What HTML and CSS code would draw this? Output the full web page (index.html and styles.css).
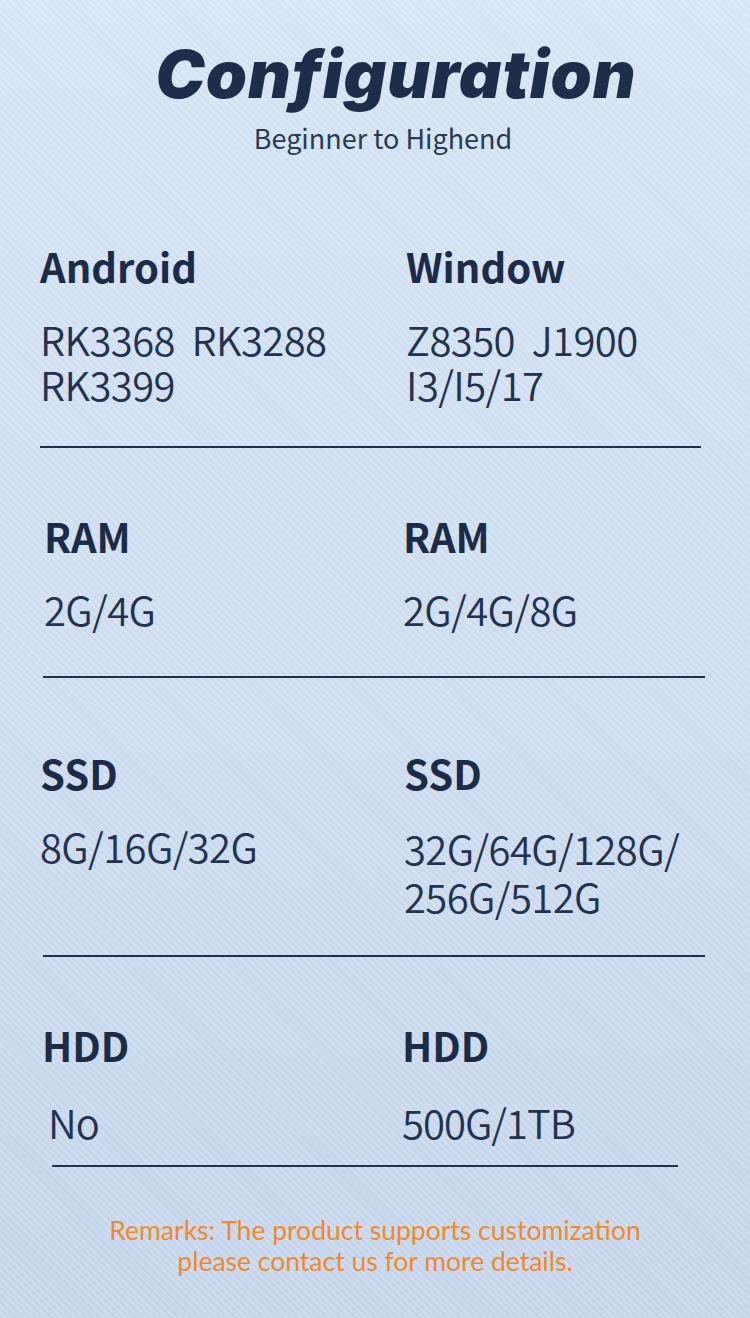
FILE: index.html
```html
<!DOCTYPE html>
<html lang="en">
<head>
<meta charset="utf-8">
<title>Configuration</title>
<link rel="stylesheet" href="styles.css">
</head>
<body>
<main class="page">
  <header class="hero">
    <h1 class="title">Configuration</h1>
    <p class="subtitle">Beginner to Highend</p>
  </header>

  <section class="spec spec--os">
    <div class="col">
      <h2 class="label">Android</h2>
      <p class="value">RK3368&nbsp;&nbsp;RK3288<br>RK3399</p>
    </div>
    <div class="col col--right">
      <h2 class="label">Window</h2>
      <p class="value">Z8350&nbsp;&nbsp;J1900<br>I3/I5/17</p>
    </div>
  </section>
  <hr class="rule rule--os">

  <section class="spec spec--ram">
    <div class="col">
      <h2 class="label">RAM</h2>
      <p class="value">2G/4G</p>
    </div>
    <div class="col col--right">
      <h2 class="label">RAM</h2>
      <p class="value">2G/4G/8G</p>
    </div>
  </section>
  <hr class="rule rule--ram">

  <section class="spec spec--ssd">
    <div class="col">
      <h2 class="label">SSD</h2>
      <p class="value">8G/16G/32G</p>
    </div>
    <div class="col col--right">
      <h2 class="label">SSD</h2>
      <p class="value value--tall">32G/64G/128G/<br>256G/512G</p>
    </div>
  </section>
  <hr class="rule rule--ssd">

  <section class="spec spec--hdd">
    <div class="col">
      <h2 class="label">HDD</h2>
      <p class="value value--narrow value--indent">No</p>
    </div>
    <div class="col col--right">
      <h2 class="label">HDD</h2>
      <p class="value value--narrow">500G/1TB</p>
    </div>
  </section>
  <hr class="rule rule--hdd">

  <p class="remarks">Remarks: The product supports customization<br>please contact us for more details.</p>
</main>
</body>
</html>
```

FILE: styles.css
```css
html, body {
  margin: 0;
  padding: 0;
}

body {
  width: 750px;
  height: 1318px;
  overflow: hidden;
  color: #1f2f4c;
  font-family: "Noto Sans CJK SC", "Noto Sans", sans-serif;
  background-color: #cddded;
  background-image:
    repeating-linear-gradient(45deg, rgba(255,255,255,0) 0px, rgba(255,255,255,0) 3px, rgba(255,255,255,0.18) 3px, rgba(255,255,255,0.18) 5px),
    linear-gradient(180deg, #d4e4f4 0%, #cddcf0 50%, #c5d5ec 100%);
}

.page {
  display: flex;
  flex-direction: column;
}

.hero {
  display: flex;
  flex-direction: column;
  align-items: center;
  padding-top: 42px;
}

.title {
  margin: 0 0 0 42px;
  font-family: "Inter", "Liberation Sans", sans-serif;
  font-weight: 900;
  font-style: italic;
  font-size: 66px;
  line-height: 64px;
  letter-spacing: 1px;
  color: #1e2d4a;
}

.subtitle {
  margin: 15px 0 0 16px;
  font-size: 27px;
  line-height: 34px;
  color: #2a3a55;
}

.spec {
  display: grid;
  grid-template-columns: 364px 1fr;
  padding-left: 40px;
}

.col {
  display: flex;
  flex-direction: column;
  gap: 27px;
}

.label {
  margin: 0;
  font-weight: 700;
  font-size: 40px;
  line-height: 48px;
  color: #1c2c48;
}

.value {
  margin: 0;
  font-weight: 350;
  font-size: 40px;
  line-height: 45px;
  letter-spacing: -0.6px;
  color: #22324f;
}

.value--tall {
  line-height: 48px;
}

.value--narrow {
  letter-spacing: -1px;
}

.value--indent {
  padding-left: 6px;
}

.spec--os { padding-top: 87px; grid-template-columns: 366px 1fr; }
.spec--ram { padding-top: 64px; padding-left: 44px; grid-template-columns: 359px 1fr; }
.spec--ssd { padding-top: 71px; }
.spec--hdd { padding-top: 64px; padding-left: 42px; grid-template-columns: 360px 1fr; }
.spec--hdd .col { gap: 31px; }

.rule {
  height: 2px;
  border: 0;
  margin: 0;
  background: #1f2f4c;
}

.rule--os { margin: 39px 49px 0 40px; }
.rule--ram { margin: 44px 45px 0 43px; }
.rule--ssd { margin: 35px 45px 0 43px; }
.rule--hdd { margin: 20px 72px 0 52px; }

.remarks {
  margin: 48px 0 0;
  text-align: center;
  font-family: "Lato", "Open Sans", sans-serif;
  font-size: 26.5px;
  line-height: 31px;
  color: #ef8a2b;
}
```
